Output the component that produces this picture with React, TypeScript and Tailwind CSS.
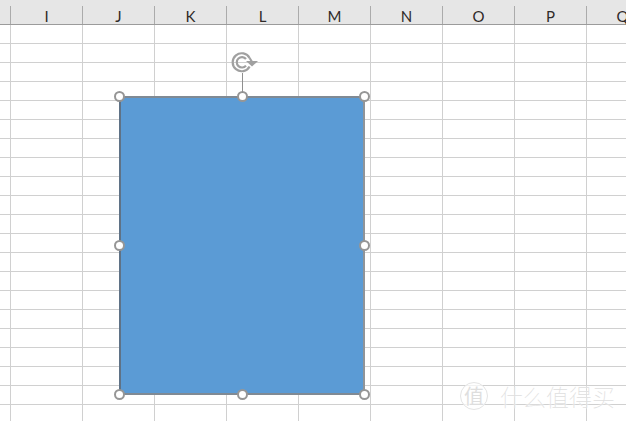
const columns = ['I', 'J', 'K', 'L', 'M', 'N', 'O', 'P', 'Q'];
const rows = Array.from({ length: 21 }, (_, i) => i);

function Handle() {
  return <div className="h-[11px] w-[11px] rounded-full border-[2.5px] border-[#969696] bg-white" />;
}

function RotateIcon() {
  return (
    <svg width="28" height="22" viewBox="0 0 28 22" fill="none" stroke="#a0a0a0" className="block">
      <path d="M19.6 15.5 A9 9 0 1 1 19.6 7" strokeWidth="2.2" />
      <path d="M16 14.6 A5.2 5.2 0 1 1 16 8" strokeWidth="2.2" />
      <path d="M19.6 7 L21.8 10.5" strokeWidth="2.2" />
      <path d="M16 10 H28 L22 15.5 Z" fill="#a0a0a0" stroke="none" />
    </svg>
  );
}

export default function App() {
  return (
    <div className="relative h-[421px] w-[626px] overflow-hidden bg-white font-['Lato',sans-serif]">
      {/* column header */}
      <div className="flex h-[25px] border-b border-[#9b9b9b] bg-[#e6e6e6] pt-[6px]">
        <div className="h-full w-[11px] shrink-0 border-r border-[#ababab]" />
        {columns.map((c) => (
          <div
            key={c}
            className="flex h-full w-[72px] shrink-0 items-center justify-center border-r border-[#ababab] pt-[2px] text-[15px] leading-none text-[#2f2a28]"
          >
            {c}
          </div>
        ))}
      </div>

      {/* cells */}
      {rows.map((r) => (
        <div key={r} className="flex h-[19px] border-b border-[#d0d0d0]">
          <div className="h-full w-[11px] shrink-0 border-r border-[#d0d0d0]" />
          {columns.map((c) => (
            <div key={c} className="h-full w-[72px] shrink-0 border-r border-[#d0d0d0]" />
          ))}
        </div>
      ))}

      {/* selected shape with its handles */}
      <div className="absolute left-[119px] top-[96px] h-[299px] w-[246px] border-2 border-y-[#808a94] border-r-[#8f9499] border-l-[#5f7286] bg-[#5b9bd5]">
        <div className="absolute -inset-[7px] grid grid-cols-[123px_122px_11px] grid-rows-[149px_149px_11px]">
          <Handle />
          <Handle />
          <Handle />
          <Handle />
          <div />
          <Handle />
          <Handle />
          <Handle />
          <Handle />
        </div>
      </div>

      {/* rotate handle */}
      <div className="absolute left-[230px] top-[51px] flex flex-col">
        <RotateIcon />
        <div className="ml-[12px] h-[20px] w-px bg-[#8f8f8f]" />
      </div>

      {/* watermark */}
      <div className="absolute left-[460px] top-[382px] flex items-center gap-[12px] font-['Noto_Sans_CJK_SC',sans-serif] text-[#dedede] [text-shadow:0_0_2px_#fff,0_0_2px_#fff]">
        <div className="flex h-[28px] w-[28px] items-center justify-center rounded-full border border-[#e4e4e4] bg-white/70 text-[20px] leading-none">
          值
        </div>
        <div className="text-[23px] font-thin leading-none">什么值得买</div>
      </div>
    </div>
  );
}
